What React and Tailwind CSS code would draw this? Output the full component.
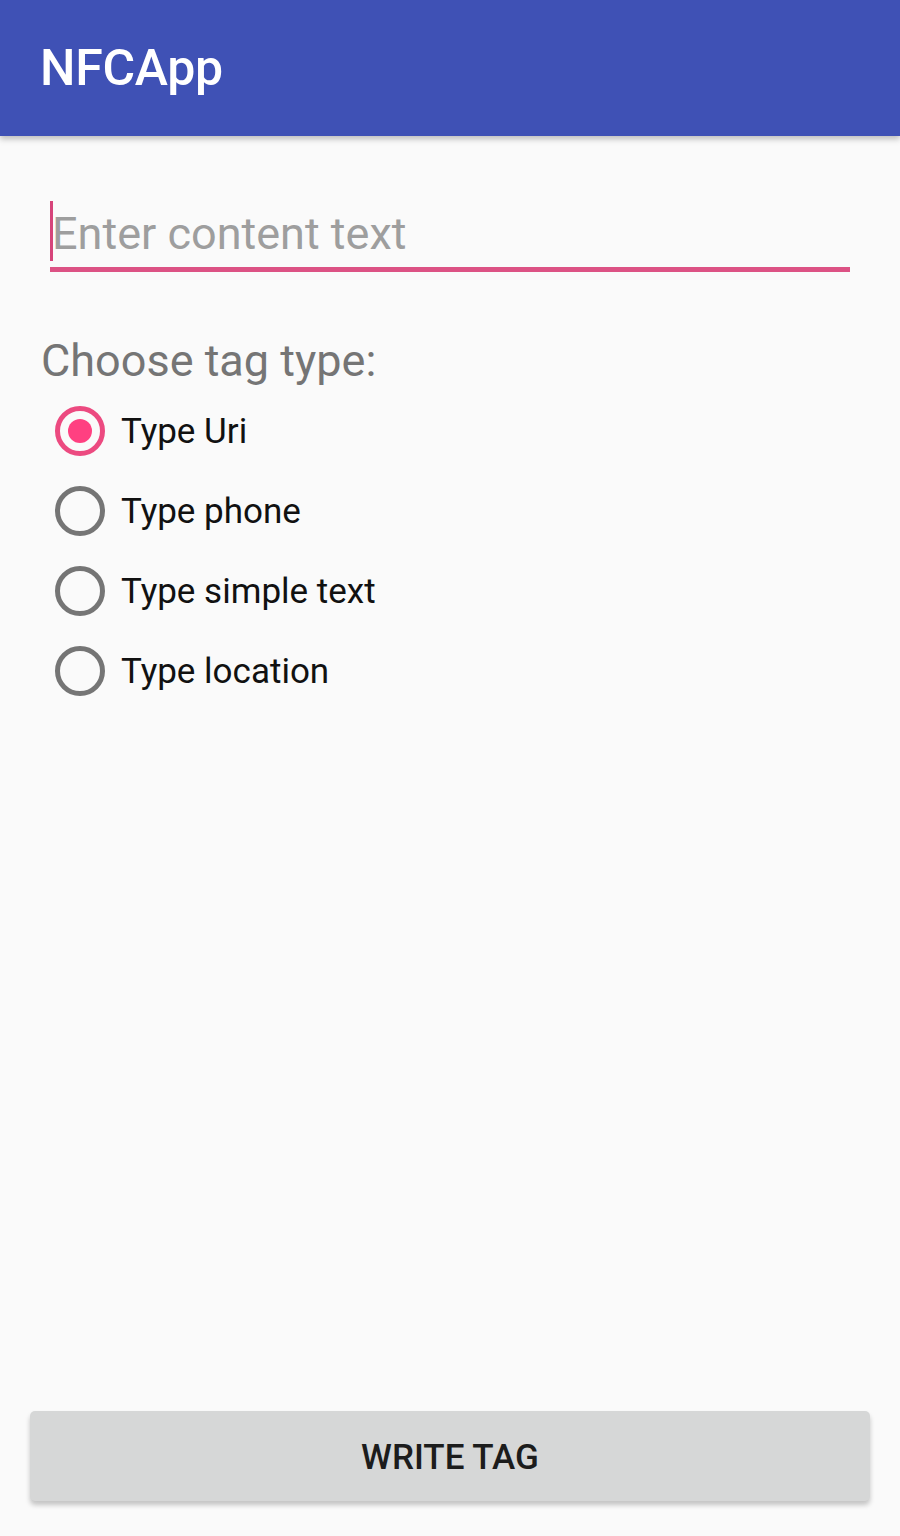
import React from "react";

function Radio({ checked }) {
  return (
    <svg width="52" height="52" viewBox="0 0 52 52" className="shrink-0">
      <circle cx="26" cy="26" r="22.5" fill="none" stroke={checked ? "#EC4A80" : "#757575"} strokeWidth="5" />
      {checked && <circle cx="26" cy="26" r="12" fill="#FF4081" />}
    </svg>
  );
}

export default function App() {
  const options = ["Type Uri", "Type phone", "Type simple text", "Type location"];
  return (
    <div className="w-[900px] h-[1536px] flex flex-col bg-[#FAFAFA] overflow-hidden" style={{ fontFamily: "Roboto, 'Noto Sans', sans-serif" }}>
      <header className="h-[136px] shrink-0 bg-[#3F51B5] flex items-center pl-[40px] shadow-[0_3px_6px_rgba(0,0,0,0.25)] relative z-10">
        <h1 className="text-[50px] font-medium text-white leading-none tracking-[-0.3px]">NFCApp</h1>
      </header>

      <main className="flex-1 flex flex-col px-[41px]">
        <div className="mt-[65px] ml-[9px] mr-[9px] relative h-[71px] border-b-[5px] border-[#DC5284]">
          <div className="absolute left-0 top-0 w-[3px] h-[60px] bg-[#D6447A]" />
          <div className="pl-[2px] pt-[7px] text-[45px] leading-[52px] text-[#9E9E9E]">Enter content text</div>
        </div>

        <div className="mt-[63px] text-[45px] leading-[52px] text-[#757575]">Choose tag type:</div>

        <div className="flex flex-col mt-[4px] ml-[13px]">
          {options.map((o, i) => (
            <div key={o} className="h-[80px] flex items-center gap-[15px]">
              <Radio checked={i === 0} />
              <span className="text-[35px] text-[#111111] leading-none">{o}</span>
            </div>
          ))}
        </div>

        <div className="mt-auto mb-[35px] -mx-[11px]">
          <button className="w-full h-[90px] pt-[4px] rounded-[5px] bg-[#D6D7D7] shadow-[0_4px_5px_rgba(0,0,0,0.22)] text-[35px] font-medium text-[#1C1C1C]">
            WRITE TAG
          </button>
        </div>
      </main>
    </div>
  );
}
